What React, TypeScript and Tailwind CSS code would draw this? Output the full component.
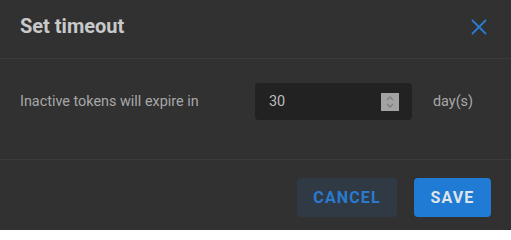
import { X } from "lucide-react";

const Spinner = () => (
  <div className="w-[18px] h-[18px] bg-[#a3a3a3] flex items-center justify-center">
    <svg width="10" height="14" viewBox="0 0 10 14" fill="none" stroke="#7d7d7d" strokeWidth="1.4">
      <path d="M2 5 L5 2 L8 5" />
      <path d="M2 9 L5 12 L8 9" />
    </svg>
  </div>
);

export default function App() {
  return (
    <div className="w-[511px] h-[230px] bg-[#313131] font-['Roboto',sans-serif] flex flex-col">
      <div className="h-[59px] flex items-center justify-between pl-5 pr-[19px] border-b border-[#3b3b3b] shrink-0">
        <h2 className="text-[20px] font-bold text-[#c9c9c9] leading-none mt-[-6px]">Set timeout</h2>
        <button className="text-[#2a7bd0] mt-[-5px]">
          <X className="w-[26px] h-[26px]" strokeWidth={1.7} />
        </button>
      </div>

      <div className="h-[101px] flex items-start pl-5 pt-6 border-b border-[#3b3b3b] shrink-0">
        <span className="w-[235px] text-[14.4px] text-[#a8a8a8] leading-[37px]">Inactive tokens will expire in</span>
        <div className="w-[157px] h-[37px] bg-[#222222] rounded-[4px] flex items-center justify-between pl-[14px] pr-[13px]">
          <span className="text-[14.4px] text-[#bdbdbd]">30</span>
          <Spinner />
        </div>
        <span className="ml-[21px] text-[14.4px] text-[#a8a8a8] leading-[37px]">day(s)</span>
      </div>

      <div className="flex-1 flex items-start justify-end pt-[18px] pr-5 gap-[17px]">
        <button className="w-[100px] h-[39px] rounded-[4px] bg-[#2f3a45] text-[#2a7bd0] text-[16px] font-bold tracking-[0.07em]">
          CANCEL
        </button>
        <button className="w-[77px] h-[39px] rounded-[4px] bg-[#1f7bd4] text-[#dfe5eb] text-[16px] font-bold tracking-[0.07em]">
          SAVE
        </button>
      </div>
    </div>
  );
}
